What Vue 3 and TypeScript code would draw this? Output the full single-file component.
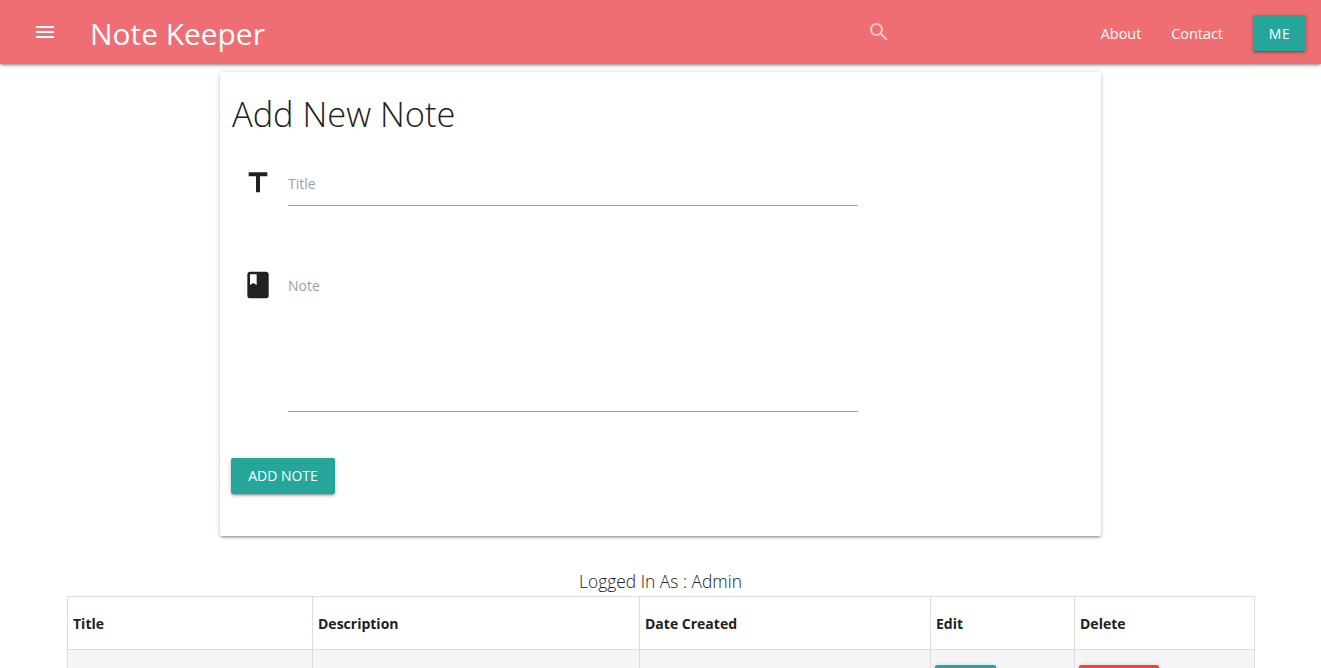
<script setup lang="ts">
const headers: string[] = ['Title', 'Description', 'Date Created', 'Edit', 'Delete']
</script>

<template>
  <div class="page">
    <header class="nav">
      <svg class="menu" viewBox="0 0 24 24" width="24" height="24"><path d="M3 18h18v-2H3v2zm0-5h18v-2H3v2zm0-7v2h18V6H3z" /></svg>
      <span class="brand">Note Keeper</span>
      <svg class="search" viewBox="0 0 24 24" width="24" height="24"><path d="M15.5 14h-.79l-.28-.27C15.41 12.59 16 11.11 16 9.5 16 5.91 13.09 3 9.5 3S3 5.91 3 9.5 5.91 16 9.5 16c1.61 0 3.09-.59 4.23-1.57l.27.28v.79l5 4.99L20.49 19l-4.99-5zm-6 0C7.01 14 5 11.99 5 9.5S7.01 5 9.5 5 14 7.01 14 9.5 11.99 14 9.5 14z" /></svg>
      <nav class="links">
        <a>About</a>
        <a>Contact</a>
        <button class="btn me">ME</button>
      </nav>
    </header>

    <section class="card">
      <h1>Add New Note</h1>
      <div class="field title-field">
        <svg class="prefix" viewBox="0 0 24 24" width="32" height="32"><path d="M5 4v3h5.5v12h3V7H19V4z" /></svg>
        <div class="control"><span class="placeholder">Title</span></div>
      </div>
      <div class="field note-field">
        <svg class="prefix" viewBox="0 0 24 24" width="32" height="32"><path d="M18 2H6c-1.1 0-2 .9-2 2v16c0 1.1.9 2 2 2h12c1.1 0 2-.9 2-2V4c0-1.1-.9-2-2-2zM6 4h5v8l-2.5-1.5L6 12V4z" /></svg>
        <div class="control"><span class="placeholder">Note</span></div>
      </div>
      <button class="btn add">ADD NOTE</button>
    </section>

    <p class="logged">Logged In As : Admin</p>

    <table class="notes">
      <colgroup>
        <col class="c1" />
        <col class="c2" />
        <col class="c3" />
        <col class="c4" />
        <col class="c5" />
      </colgroup>
      <thead>
        <tr><th v-for="h in headers" :key="h">{{ h }}</th></tr>
      </thead>
      <tbody>
        <tr>
          <td></td>
          <td></td>
          <td></td>
          <td><button class="btn edit"></button></td>
          <td><button class="btn del"></button></td>
        </tr>
      </tbody>
    </table>
  </div>
</template>

<style>
html, body { margin: 0; height: 100%; overflow: hidden; background: #fff; }
</style>

<style scoped>
.page {
  height: 668px;
  overflow: hidden;
  font-family: "Open Sans", "Noto Sans", sans-serif;
  color: #212121;
}
.nav {
  height: 64px;
  background: #ef6e73;
  box-shadow: 0 2px 2px 0 rgba(0,0,0,.14), 0 3px 1px -2px rgba(0,0,0,.12), 0 1px 5px 0 rgba(0,0,0,.2);
  display: flex;
  align-items: center;
  padding: 0 15px 0 33px;
  color: #fff;
  position: relative;
}
.menu { fill: #fff; flex: none; }
.brand { font-size: 29.9px; font-weight: 400; margin: 4px 0 0 33px; line-height: 64px; }
.search { fill: rgba(255,255,255,.6); margin-left: 602px; flex: none; }
.links { margin-left: auto; display: flex; align-items: center; gap: 30px; }
.links a { font-size: 14.4px; margin-top: 2px; }
.btn {
  border: none;
  border-radius: 2px;
  color: #fff;
  font-family: inherit;
  padding: 0;
  box-shadow: 0 2px 2px 0 rgba(0,0,0,.14), 0 3px 1px -2px rgba(0,0,0,.12), 0 1px 5px 0 rgba(0,0,0,.2);
}
.me { width: 53px; height: 36px; background: #26a69a; font-size: 14px; letter-spacing: .5px; margin-top: 2px; }
.card {
  width: 881px;
  height: 464px;
  box-sizing: border-box;
  margin: 8px 0 0 220px;
  padding: 1px 11px 0;
  border-radius: 2px;
  background: #fff;
  box-shadow: 0 2px 2px 0 rgba(0,0,0,.14), 0 3px 1px -2px rgba(0,0,0,.12), 0 1px 5px 0 rgba(0,0,0,.2);
}
h1 { font-size: 34.4px; font-weight: 300; line-height: 42px; margin: 20px 0 0 1px; }
.field { display: flex; }
.prefix { fill: #212121; flex: none; margin-left: 11px; }
.control { width: 570px; margin-left: 14px; border-bottom: 1px solid #9e9e9e; }
.placeholder { font-size: 14px; color: #9e9e9e; }
.title-field { margin-top: 32px; }
.title-field .control { height: 38px; line-height: 32px; }
.note-field { margin-top: 63px; }
.note-field .control { height: 142px; line-height: 32px; }
.add { display: block; width: 104px; height: 36px; margin-top: 46px; padding-bottom: 2px; background: #26a69a; font-size: 14px; }
.logged { margin: 32px 0 2px; text-align: center; font-size: 17.4px; line-height: 26px; font-weight: 300; }
.notes {
  border-collapse: collapse;
  table-layout: fixed;
  width: 1187px;
  margin-left: 67px;
  font-size: 14px;
}
.c1 { width: 245px; }
.c2 { width: 327px; }
.c3 { width: 291px; }
.c4 { width: 144px; }
.c5 { width: 180px; }
th, td { border: 1px solid #ddd; padding: 5px; text-align: left; }
th { height: 42px; font-weight: 700; }
tbody tr { background: #f5f5f5; }
td { height: 80px; vertical-align: top; padding: 15px 4px 0; }
.edit { display: block; width: 61px; height: 36px; background: #26a69a; }
.del { display: block; width: 80px; height: 36px; background: #f44336; }
</style>
